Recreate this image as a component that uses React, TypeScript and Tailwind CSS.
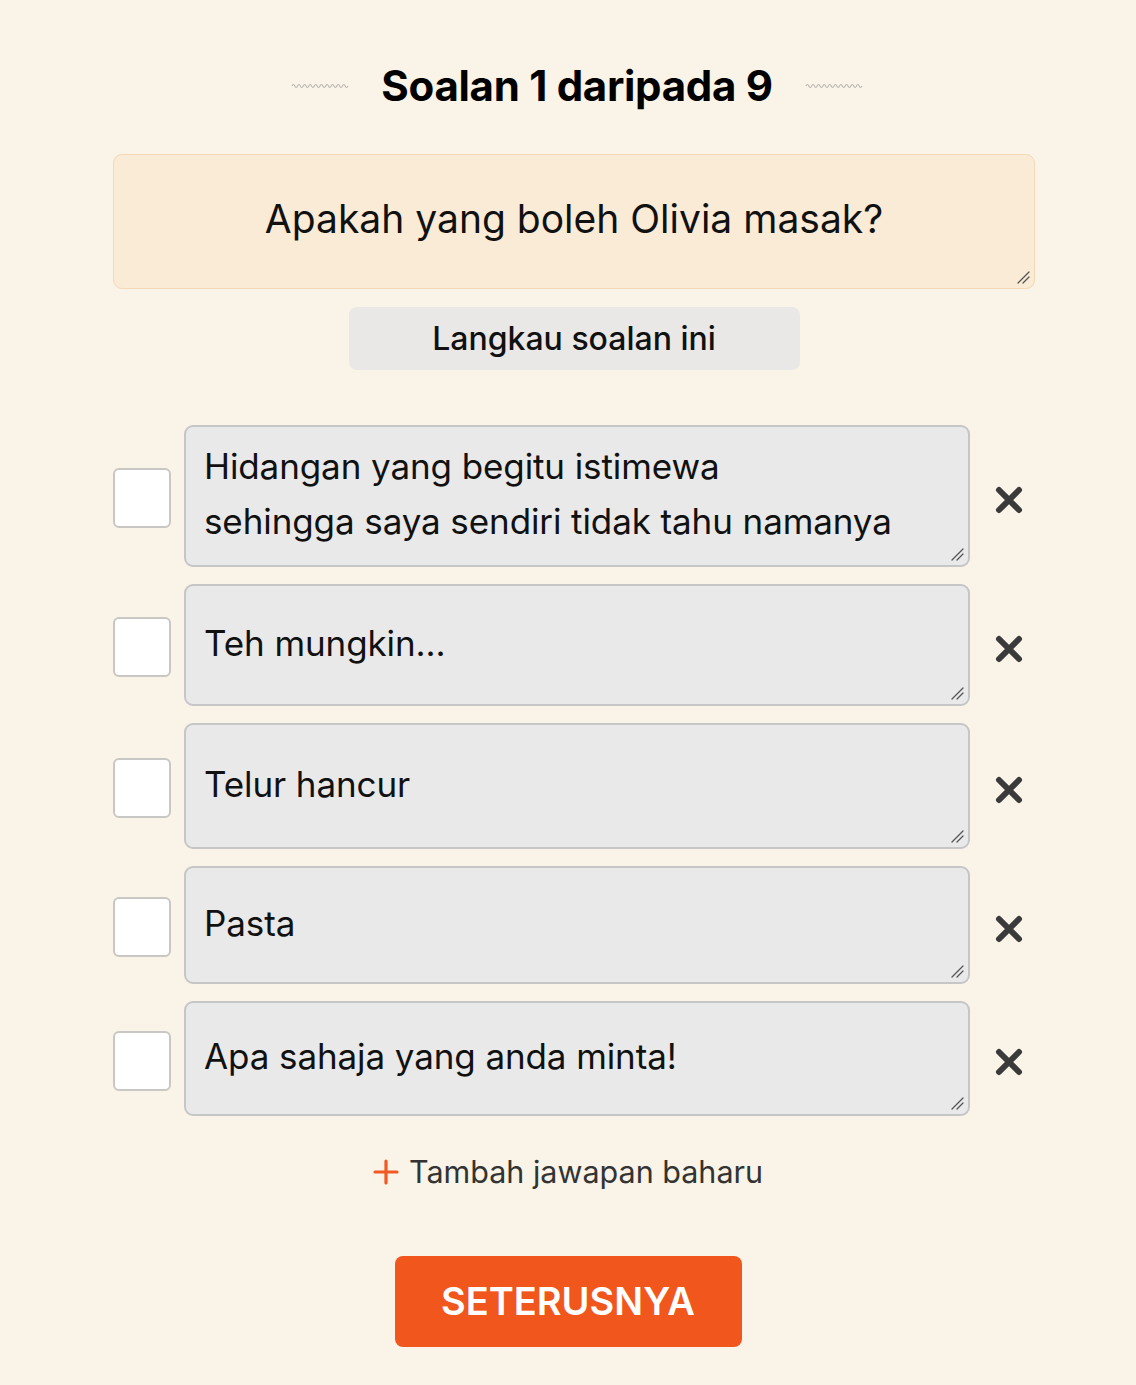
import React from "react";

const font = { fontFamily: "Inter, 'Noto Sans', 'Liberation Sans', sans-serif" };

function Squiggle() {
  let d = "M1 4";
  for (let i = 0; i < 10; i++) {
    const x = 1 + i * 5.6;
    d += ` Q ${x + 1.4} 1, ${x + 2.8} 4 T ${x + 5.6} 4`;
  }
  return (
    <svg width="58" height="8" viewBox="0 0 58 8" className="shrink-0">
      <path d={d} fill="none" stroke="#b9b5ae" strokeWidth="1.1" />
    </svg>
  );
}

function Grip() {
  return (
    <svg width="14" height="14" viewBox="0 0 14 14" className="absolute right-[4px] bottom-[4px]">
      <path d="M2 13 L13 2 M7 13 L13 7" stroke="#555" strokeWidth="1.3" strokeLinecap="round" />
    </svg>
  );
}

function XIcon() {
  return (
    <svg width="30" height="30" viewBox="0 0 30 30">
      <path d="M5 5 L25 25 M25 5 L5 25" stroke="#3a3a3a" strokeWidth="6" strokeLinecap="round" />
    </svg>
  );
}

const answers = [
  { lines: ["Hidangan yang begitu istimewa", "sehingga saya sendiri tidak tahu namanya"], h: 142 },
  { lines: ["Teh mungkin..."], h: 122 },
  { lines: ["Telur hancur"], h: 126 },
  { lines: ["Pasta"], h: 118 },
  { lines: ["Apa sahaja yang anda minta!"], h: 115 },
];

export default function App() {
  return (
    <div className="min-h-[1385px] w-full bg-[#f9f3e8] text-black" style={font}>
      <div className="ml-[113px] w-[922px] pt-[58px]">
        <div className="flex items-center justify-center gap-[32px] pl-[6px]">
          <Squiggle />
          <h1 className="text-[42px] font-bold leading-[56px] tracking-[-0.3px]">Soalan 1 daripada 9</h1>
          <Squiggle />
        </div>

        <div className="relative mt-[40px] h-[135px] rounded-[9px] border border-[#f3d9b4] bg-[#faebd6] flex items-center justify-center pb-[6px]">
          <span className="text-[39px] leading-[48px] text-[#111]">Apakah yang boleh Olivia masak?</span>
          <Grip />
        </div>

        <div className="mt-[18px] flex justify-center">
          <button className="h-[63px] w-[451px] rounded-[8px] bg-[#e9e8e6] text-[32px] font-medium text-[#111]">
            Langkau soalan ini
          </button>
        </div>

        <div className="mt-[55px] flex flex-col gap-[17px]">
          {answers.map((a, i) => (
            <div key={i} className="flex items-center">
              <div className="mt-[4px] h-[60px] w-[58px] shrink-0 rounded-[6px] border-2 border-[#c9c7c3] bg-white" />
              <div
                className="relative ml-[13px] flex w-[786px] shrink-0 items-center rounded-[9px] border-2 border-[#c6c6c6] bg-[#e9e9e9] pl-[18px] pr-[19px] pb-[4px]"
                style={{ height: a.h }}
              >
                <div className="text-[35px] leading-[55px] tracking-[-0.1px] text-[#111]">
                  {a.lines.map((l, j) => (
                    <div key={j}>{l}</div>
                  ))}
                </div>
                <Grip />
              </div>
              <div className="ml-[24px] mt-[7px] flex w-[30px] justify-center">
                <XIcon />
              </div>
            </div>
          ))}
        </div>
      </div>

      <div className="mt-[33px] flex items-center justify-center gap-[10px] text-[30.5px] text-[#333]" style={font}>
        <svg width="26" height="26" viewBox="0 0 26 26">
          <path d="M13 2 V24 M2 13 H24" stroke="#f05a22" strokeWidth="3.2" strokeLinecap="round" />
        </svg>
        <span>Tambah jawapan baharu</span>
      </div>

      <div className="mt-[61px] flex justify-center">
        <button className="h-[91px] w-[347px] rounded-[8px] bg-[#f1561d] text-[38px] font-semibold text-white">
          SETERUSNYA
        </button>
      </div>
    </div>
  );
}
